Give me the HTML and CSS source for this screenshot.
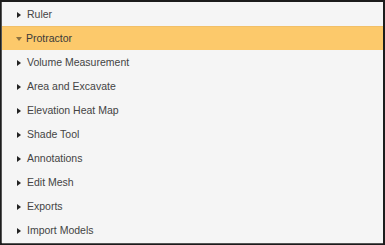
FILE: index.html
```html
<!DOCTYPE html>
<html>
<head>
<meta charset="utf-8">
<link rel="stylesheet" href="styles.css">
</head>
<body>
<div class="panel">
  <div class="row"><span class="tri right"></span><span class="label">Ruler</span></div>
  <div class="row active"><span class="tri down"></span><span class="label">Protractor</span></div>
  <div class="row"><span class="tri right"></span><span class="label">Volume Measurement</span></div>
  <div class="row"><span class="tri right"></span><span class="label">Area and Excavate</span></div>
  <div class="row"><span class="tri right"></span><span class="label">Elevation Heat Map</span></div>
  <div class="row"><span class="tri right"></span><span class="label">Shade Tool</span></div>
  <div class="row"><span class="tri right"></span><span class="label">Annotations</span></div>
  <div class="row"><span class="tri right"></span><span class="label">Edit Mesh</span></div>
  <div class="row"><span class="tri right"></span><span class="label">Exports</span></div>
  <div class="row"><span class="tri right"></span><span class="label">Import Models</span></div>
</div>
</body>
</html>
```
FILE: styles.css
```css
html, body {
  margin: 0;
  padding: 0;
  background: #1c1c1c;
  width: 385px;
  height: 245px;
  overflow: hidden;
}
.panel {
  margin: 2px 2px 0 2px;
  width: 381px;
  height: 241px;
  background: #f5f5f5;
  box-shadow: -1px 0 0 #555, 0 1px 0 #555;
  display: flex;
  flex-direction: column;
  font-family: "Liberation Sans", Arial, sans-serif;
  font-size: 10.5px;
  color: #444;
}
.row {
  height: 24px;
  display: flex;
  align-items: center;
  padding-left: 14px;
  padding-top: 1px;
  box-sizing: border-box;
}
.row.active {
  background: #fcc96b;
  border-top: 1px solid #f2c068;
  padding-top: 0;
  color: #3a3a3a;
}
.tri {
  width: 0;
  height: 0;
}
.tri.right {
  border-top: 3.5px solid transparent;
  border-bottom: 3.5px solid transparent;
  border-left: 4px solid #222;
  margin-left: 1px;
  margin-right: 6px;
}
.tri.down {
  border-left: 3.5px solid transparent;
  border-right: 3.5px solid transparent;
  border-top: 4px solid #8a7040;
  margin-right: 4px;
}
.label {
  line-height: 1;
}
```
